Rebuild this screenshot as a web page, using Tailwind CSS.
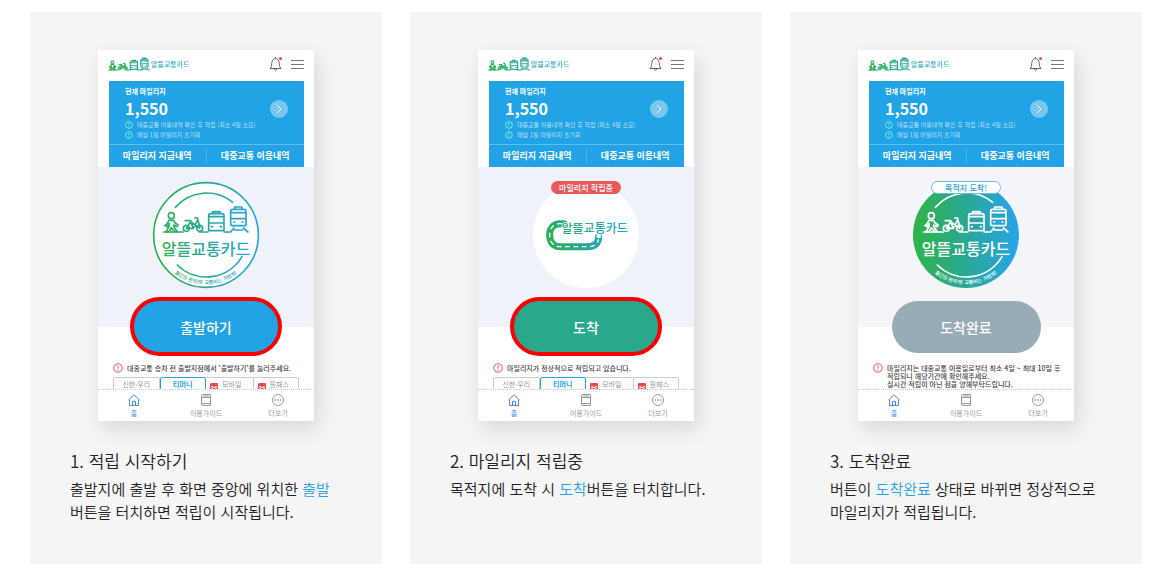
<!DOCTYPE html>
<html lang="ko">
    <head>
        <meta charset="UTF-8">
        <meta name="viewport" content="width=device-width, initial-scale=1.0">
        <title>알뜰교통카드 이용방법</title>
        <script src="https://cdn.jsdelivr.net/npm/@tailwindcss/browser@4"></script>
    </head>
    <body class="bg-white font-['Noto_Sans_CJK_KR',sans-serif] text-[#222]">

        <!-- shared icons -->
        <svg class="absolute size-0" aria-hidden="true">
            <defs>
                <linearGradient id="brand" gradientUnits="userSpaceOnUse" x1="200" y1="0" x2="500" y2="0">
                    <stop offset="0" stop-color="#2fb34a" />
                    <stop offset="0.5" stop-color="#2aa795" />
                    <stop offset="1" stop-color="#27a5e6" />
                </linearGradient>
                <linearGradient id="brand-small" gradientUnits="userSpaceOnUse" x1="222" y1="0" x2="650" y2="0">
                    <stop offset="0" stop-color="#2fb34a" />
                    <stop offset="0.5" stop-color="#2aa795" />
                    <stop offset="1" stop-color="#27a5e6" />
                </linearGradient>
                <path id="slogan-arc" d="M202 209 A148 148 0 0 0 498 209" />
            </defs>

            <!-- walker, bike, bus, train -->
            <symbol id="transport" viewBox="218 118 264 88" overflow="visible">
                <g fill="none" stroke-linecap="round" stroke-linejoin="round">
                    <circle cx="246" cy="151" r="9" />
                    <path d="M239 165 H252 Q256 174 266 178 L264 184 L253 179 L254 185 L264 199 H256 L246 187 L239 199 H230 L239 184 V175 L234 184 L227 181 Q236 174 239 165" />
                    <path d="M223 200 H282 M330 200 H356 M404 200 H424 L434 188 M462 188 L476 200" />
                    <circle cx="291" cy="189" r="9" />
                    <circle cx="331" cy="189" r="9" />
                    <path d="M291 189 L304 169 L331 189 M291 189 H312 L324 166 M288 166 H304 M316 158 H324 L332 186 M304 169 L312 189" />
                    <path d="M358 196 V150 Q358 145 364 145 H398 Q404 145 404 150 V196 Z M358 154 H404 M358 173 H404 M370 145 V139 H392 V145 M366 184 H369 M393 184 H396" />
                    <path d="M424 176 V138 Q424 132 430 132 H464 Q470 132 470 138 V176 Q470 181 464 181 H430 Q424 181 424 176 M424 142 H470 M424 160 H470 M436 132 V125 H458 V132 M433 170 H436 M458 170 H461 M435 194 H460" />
                </g>
            </symbol>

            <symbol id="bell" viewBox="0 0 14 16">
                <path d="M1 12.500 C3 10.500 2.500 8 2.800 6.500 C3.200 4 4.500 2.500 6.500 2.500 C8.500 2.500 9.800 4 10.200 6.500 C10.500 8 10 10.500 12 12.500 Z M5 13 Q6.500 15.500 8 13 M6.500 2.500 V1" fill="none" stroke="#666" />
                <circle cx="11.500" cy="2.500" r="1.500" fill="#f0443a" />
            </symbol>
            <symbol id="menu" viewBox="0 0 13 10">
                <path d="M0 1.500 H13 M0 5.500 H13 M0 9.500 H13" stroke="#777" />
            </symbol>
            <symbol id="go" viewBox="0 0 18 18">
                <circle cx="9" cy="9" r="9" fill="#fff" fill-opacity="0.4" />
                <path d="M7 5 L11 9 L7 13" fill="none" stroke="#fff" />
            </symbol>
            <symbol id="alert" viewBox="0 0 10 10">
                <circle cx="5" cy="5" r="4.200" fill="none" stroke="currentColor" />
                <path d="M5 2.500 V5.500 M5 6.500 V7.500" stroke="currentColor" />
            </symbol>
            <symbol id="home" viewBox="0 0 12 12">
                <path d="M0.500 6 L6 0.800 L11.500 6 M1.500 5.500 V11.500 H10.500 V5.500 M4.500 11.500 V7.500 H7.500 V11.500" fill="none" stroke="currentColor" />
            </symbol>
            <symbol id="guide" viewBox="0 0 12 12">
                <path d="M1.500 1.500 Q1.500 0.500 2.500 0.500 H10.500 V11.500 H3 Q1.500 11.500 1.500 10 Z M1.500 3.500 H10.500 M4 1 V3 M6 1 V3 M8 1 V3 M1.500 9.500 H10.500" fill="none" stroke="currentColor" />
            </symbol>
            <symbol id="more" viewBox="0 0 12 12">
                <circle cx="6" cy="6" r="5.500" fill="none" stroke="currentColor" />
                <path d="M2.500 6 H4 M5.200 6 H6.800 M8 6 H9.500" stroke="currentColor" stroke-width="1.500" />
            </symbol>
            <symbol id="m-card" viewBox="0 0 8 8">
                <rect width="8" height="8" rx="1" fill="#e94b4f" />
                <path d="M2 6.500 V3 L4 5 L6 3 V6.500" fill="none" stroke="#fff" />
            </symbol>
        </svg>

        <main class="grid grid-cols-3 gap-7 py-3 pl-[30px] pr-[21px]">

            <!-- step 1 -->
            <article class="bg-[#f6f5f6] pt-[38px] pb-[41px]">
                <div class="mx-auto w-[216px] bg-white shadow-[4px_8px_20px_rgba(0,0,0,0.12)]">
                    <header class="flex h-[31px] items-center px-[10px] pb-1">
                        <svg class="h-[14px] w-[42px] stroke-[url(#brand-small)] stroke-7"><use href="#transport" /></svg>
                        <span class="ml-px bg-linear-to-r from-[#2aa795] to-[#27a5e6] bg-clip-text text-[7px] font-medium leading-[14px] text-transparent">알뜰교통카드</span>
                        <button class="ml-auto mr-2" aria-label="알림"><svg class="h-4 w-[14px]"><use href="#bell" /></svg></button>
                        <button aria-label="메뉴"><svg class="h-[10px] w-[13px]"><use href="#menu" /></svg></button>
                    </header>
                    <section class="ml-[11px] mr-[10px] bg-[#21a3e6] text-white">
                        <div class="flex h-16 items-center border-b border-white/30 px-4">
                            <div>
                                <h3 class="text-[7px] font-bold leading-[10px]">현재 마일리지</h3>
                                <p class="text-[16px] font-bold leading-[24px]">1,550</p>
                                <p class="flex items-center gap-1 text-[6px] leading-[10px] whitespace-nowrap text-white/70"><svg class="size-2 text-[#8ffbe0]"><use href="#alert" /></svg>대중교통 이용내역 확인 후 적립 (최소 4일 소요)</p>
                                <p class="flex items-center gap-1 text-[6px] leading-[10px] whitespace-nowrap text-white/70"><svg class="size-2 text-[#8ffbe0]"><use href="#alert" /></svg>매월 1일 마일리지 초기화</p>
                            </div>
                            <button class="-mt-2 ml-auto" aria-label="마일리지 보기"><svg class="size-[18px]"><use href="#go" /></svg></button>
                        </div>
                        <div class="grid h-[22px] grid-cols-2 items-center divide-x divide-white/20 text-center text-[9px] font-bold leading-[14px]">
                            <a href="#">마일리지 지급내역</a>
                            <a href="#">대중교통 이용내역</a>
                        </div>
                    </section>
                    <section class="bg-[#eff2f9] pt-[14px] pb-[38px]">
                        <svg class="mx-auto size-[108px]" viewBox="188 47 324 324">
                            <circle cx="350" cy="209" r="157" fill="#fff" stroke="url(#brand)" stroke-width="5" />
                            <path d="M258 126 A124 124 0 0 1 430 111 M264 299 A124 124 0 0 0 458 274" fill="none" stroke="url(#brand)" stroke-width="5" stroke-linecap="round" />
                            <use href="#transport" x="218" y="118" width="264" height="88" stroke="url(#brand)" stroke-width="5" />
                            <text x="350" y="270" text-anchor="middle" font-size="48" font-weight="500" fill="url(#brand)">알뜰교통카드</text>
                            <text font-size="15" font-weight="500" fill="url(#brand)" text-anchor="middle"><textPath href="#slogan-arc" startOffset="50%">출근은 편하게! 교통비는 가볍게!</textPath></text>
                        </svg>
                    </section>
                    <div class="relative -mt-[30px] flex h-[59px] items-center justify-center">
                        <button class="h-[59px] w-[152px] rounded-full border-4 border-[#fb0000] bg-[#21a3e6] text-[14px] font-medium leading-[20px] text-white">출발하기</button>
                    </div>
                    <section class="h-[33px] overflow-hidden px-[15px] pt-2">
                        <p class="flex gap-1 text-[7px] font-medium leading-[8px] whitespace-nowrap text-[#444]"><svg class="-my-px size-[10px] shrink-0 text-[#ee4a60]"><use href="#alert" /></svg>대중교통 승차 전 출발지점에서 '출발하기'를 눌러주세요.</p>
                        <div class="mt-[5px] grid grid-cols-4 text-center text-[7px] leading-[12px] text-[#999]">
                            <button class="h-5 rounded-t-xs border border-[#ccc] pb-2">신한·우리</button>
                            <button class="h-5 rounded-t-xs border border-[#21a3e6] pb-2 font-bold text-[#21a3e6]">티머니</button>
                            <button class="flex h-5 items-start gap-1 border-y border-[#ccc] pl-1"><svg class="mt-[5px] size-2"><use href="#m-card" /></svg>모바일</button>
                            <button class="flex h-5 items-start gap-1 rounded-t-xs border border-[#ccc] pl-1"><svg class="mt-[5px] size-2"><use href="#m-card" /></svg><span class="mt-[2px] leading-[8px]">원패스</span></button>
                        </div>
                    </section>
                    <nav class="grid h-8 grid-cols-3 border-t border-dotted border-[#ccc] pt-1 text-center text-[7px] leading-[14px] text-[#999]">
                        <a href="#" class="text-[#4a90e2]"><svg class="mx-auto size-3"><use href="#home" /></svg>홈</a>
                        <a href="#"><svg class="mx-auto size-3"><use href="#guide" /></svg>이용가이드</a>
                        <a href="#"><svg class="mx-auto size-3"><use href="#more" /></svg>더보기</a>
                    </nav>
                </div>
                <div class="px-10 pt-7">
                    <h2 class="text-[17px] font-[350] leading-[24px]">1. 적립 시작하기</h2>
                    <p class="mt-1 text-[15px] font-[350] leading-[23px]">출발지에 출발 후 화면 중앙에 위치한 <span class="text-[#2b9fe3]">출발</span><br>버튼을 터치하면 적립이 시작됩니다.</p>
                </div>
            </article>

            <!-- step 2 -->
            <article class="bg-[#f6f5f6] pt-[38px] pb-[41px]">
                <div class="mx-auto w-[216px] bg-white shadow-[4px_8px_20px_rgba(0,0,0,0.12)]">
                    <header class="flex h-[31px] items-center px-[10px] pb-1">
                        <svg class="h-[14px] w-[42px] stroke-[url(#brand-small)] stroke-7"><use href="#transport" /></svg>
                        <span class="ml-px bg-linear-to-r from-[#2aa795] to-[#27a5e6] bg-clip-text text-[7px] font-medium leading-[14px] text-transparent">알뜰교통카드</span>
                        <button class="ml-auto mr-2" aria-label="알림"><svg class="h-4 w-[14px]"><use href="#bell" /></svg></button>
                        <button aria-label="메뉴"><svg class="h-[10px] w-[13px]"><use href="#menu" /></svg></button>
                    </header>
                    <section class="ml-[11px] mr-[10px] bg-[#21a3e6] text-white">
                        <div class="flex h-16 items-center border-b border-white/30 px-4">
                            <div>
                                <h3 class="text-[7px] font-bold leading-[10px]">현재 마일리지</h3>
                                <p class="text-[16px] font-bold leading-[24px]">1,550</p>
                                <p class="flex items-center gap-1 text-[6px] leading-[10px] whitespace-nowrap text-white/70"><svg class="size-2 text-[#8ffbe0]"><use href="#alert" /></svg>대중교통 이용내역 확인 후 적립 (최소 4일 소요)</p>
                                <p class="flex items-center gap-1 text-[6px] leading-[10px] whitespace-nowrap text-white/70"><svg class="size-2 text-[#8ffbe0]"><use href="#alert" /></svg>매월 1일 마일리지 초기화</p>
                            </div>
                            <button class="-mt-2 ml-auto" aria-label="마일리지 보기"><svg class="size-[18px]"><use href="#go" /></svg></button>
                        </div>
                        <div class="grid h-[22px] grid-cols-2 items-center divide-x divide-white/20 text-center text-[9px] font-bold leading-[14px]">
                            <a href="#">마일리지 지급내역</a>
                            <a href="#">대중교통 이용내역</a>
                        </div>
                    </section>
                    <section class="relative bg-[#eff2f9] pt-[14px] pb-[38px]">
                        <span class="absolute inset-x-0 top-[14px] mx-auto w-[70px] rounded-full bg-[#e85a5a] text-center text-[8px] font-medium leading-[13px] text-white">마일리지 적립중</span>
                        <svg class="mx-auto size-[108px]" viewBox="188 47 324 324">
                            <circle cx="350" cy="209" r="159" fill="#fff" />
                            <g fill="none" stroke-linecap="round">
                                <path d="M284 175 H272 C250 175 241 192 241 209 C241 230 252 244 272 244 H355 C378 244 388 232 388 214" stroke="url(#brand)" stroke-width="21" />
                                <path d="M276 175 H272 C250 175 241 192 241 209 C241 230 252 244 272 244 H355 C374 244 384 236 387 224" stroke="#fff" stroke-width="4" stroke-dasharray="11 14" />
                            </g>
                            <circle cx="388" cy="212" r="7" fill="#fff" />
                            <text x="376" y="204" text-anchor="middle" font-size="36" font-weight="500" fill="url(#brand)" stroke="#fff" stroke-width="4" paint-order="stroke">알뜰교통카드</text>
                        </svg>
                    </section>
                    <div class="relative -mt-[30px] flex h-[59px] items-center justify-center">
                        <button class="h-[59px] w-[152px] rounded-full border-4 border-[#fb0000] bg-[#2aa88c] text-[14px] font-medium leading-[20px] text-white">도착</button>
                    </div>
                    <section class="h-[33px] overflow-hidden px-[15px] pt-2">
                        <p class="flex gap-1 text-[7px] font-medium leading-[8px] whitespace-nowrap text-[#444]"><svg class="-my-px size-[10px] shrink-0 text-[#ee4a60]"><use href="#alert" /></svg>마일리지가 정상적으로 적립되고 있습니다.</p>
                        <div class="mt-[5px] grid grid-cols-4 text-center text-[7px] leading-[12px] text-[#999]">
                            <button class="h-5 rounded-t-xs border border-[#ccc] pb-2">신한·우리</button>
                            <button class="h-5 rounded-t-xs border border-[#21a3e6] pb-2 font-bold text-[#21a3e6]">티머니</button>
                            <button class="flex h-5 items-start gap-1 border-y border-[#ccc] pl-1"><svg class="mt-[5px] size-2"><use href="#m-card" /></svg>모바일</button>
                            <button class="flex h-5 items-start gap-1 rounded-t-xs border border-[#ccc] pl-1"><svg class="mt-[5px] size-2"><use href="#m-card" /></svg><span class="mt-[2px] leading-[8px]">원패스</span></button>
                        </div>
                    </section>
                    <nav class="grid h-8 grid-cols-3 border-t border-dotted border-[#ccc] pt-1 text-center text-[7px] leading-[14px] text-[#999]">
                        <a href="#" class="text-[#4a90e2]"><svg class="mx-auto size-3"><use href="#home" /></svg>홈</a>
                        <a href="#"><svg class="mx-auto size-3"><use href="#guide" /></svg>이용가이드</a>
                        <a href="#"><svg class="mx-auto size-3"><use href="#more" /></svg>더보기</a>
                    </nav>
                </div>
                <div class="px-10 pt-7">
                    <h2 class="text-[17px] font-[350] leading-[24px]">2. 마일리지 적립중</h2>
                    <p class="mt-1 text-[15px] font-[350] leading-[23px]">목적지에 도착 시 <span class="text-[#2b9fe3]">도착</span>버튼을 터치합니다.</p>
                </div>
            </article>

            <!-- step 3 -->
            <article class="bg-[#f6f5f6] pt-[38px] pb-[41px]">
                <div class="mx-auto w-[216px] bg-white shadow-[4px_8px_20px_rgba(0,0,0,0.12)]">
                    <header class="flex h-[31px] items-center px-[10px] pb-1">
                        <svg class="h-[14px] w-[42px] stroke-[url(#brand-small)] stroke-7"><use href="#transport" /></svg>
                        <span class="ml-px bg-linear-to-r from-[#2aa795] to-[#27a5e6] bg-clip-text text-[7px] font-medium leading-[14px] text-transparent">알뜰교통카드</span>
                        <button class="ml-auto mr-2" aria-label="알림"><svg class="h-4 w-[14px]"><use href="#bell" /></svg></button>
                        <button aria-label="메뉴"><svg class="h-[10px] w-[13px]"><use href="#menu" /></svg></button>
                    </header>
                    <section class="ml-[11px] mr-[10px] bg-[#21a3e6] text-white">
                        <div class="flex h-16 items-center border-b border-white/30 px-4">
                            <div>
                                <h3 class="text-[7px] font-bold leading-[10px]">현재 마일리지</h3>
                                <p class="text-[16px] font-bold leading-[24px]">1,550</p>
                                <p class="flex items-center gap-1 text-[6px] leading-[10px] whitespace-nowrap text-white/70"><svg class="size-2 text-[#8ffbe0]"><use href="#alert" /></svg>대중교통 이용내역 확인 후 적립 (최소 4일 소요)</p>
                                <p class="flex items-center gap-1 text-[6px] leading-[10px] whitespace-nowrap text-white/70"><svg class="size-2 text-[#8ffbe0]"><use href="#alert" /></svg>매월 1일 마일리지 초기화</p>
                            </div>
                            <button class="-mt-2 ml-auto" aria-label="마일리지 보기"><svg class="size-[18px]"><use href="#go" /></svg></button>
                        </div>
                        <div class="grid h-[22px] grid-cols-2 items-center divide-x divide-white/20 text-center text-[9px] font-bold leading-[14px]">
                            <a href="#">마일리지 지급내역</a>
                            <a href="#">대중교통 이용내역</a>
                        </div>
                    </section>
                    <section class="relative bg-[#f4f5fa] pt-[14px] pb-[38px]">
                        <span class="absolute inset-x-0 top-[14px] mx-auto w-[70px] rounded-full border border-[#6db9e8] bg-white text-center text-[8px] font-medium leading-[11px] text-[#2b9fe3]">목적지 도착!</span>
                        <svg class="mx-auto size-[108px]" viewBox="188 47 324 324">
                            <circle cx="350" cy="209" r="159" fill="url(#brand)" />
                            <path d="M258 126 A124 124 0 0 1 430 111 M264 299 A124 124 0 0 0 458 274" fill="none" stroke="#fff" stroke-width="5" stroke-linecap="round" />
                            <use href="#transport" x="218" y="118" width="264" height="88" stroke="#fff" stroke-width="5" />
                            <text x="350" y="270" text-anchor="middle" font-size="48" font-weight="500" fill="#fff">알뜰교통카드</text>
                            <text font-size="15" font-weight="500" fill="#fff" text-anchor="middle"><textPath href="#slogan-arc" startOffset="50%">출근은 편하게! 교통비는 가볍게!</textPath></text>
                        </svg>
                    </section>
                    <div class="relative -mt-[30px] flex h-[59px] items-center justify-center">
                        <button class="h-[52px] w-[149px] rounded-full bg-[#97acb4] text-[14px] font-medium leading-[20px] text-white">도착완료</button>
                    </div>
                    <section class="h-[33px] overflow-hidden px-[15px] pt-2">
                        <p class="flex gap-1 text-[7px] font-medium leading-[8px] whitespace-nowrap text-[#444]"><svg class="-my-px size-[10px] shrink-0 text-[#ee4a60]"><use href="#alert" /></svg><span>마일리지는 대중교통 이용일로부터 최소 4일 ~ 최대 10일 후<br>적립되니 해당기간에 확인해주세요.<br>실시간 적립이 아닌 점을 양해부탁드립니다.</span></p>
                    </section>
                    <nav class="grid h-8 grid-cols-3 border-t border-dotted border-[#ccc] pt-1 text-center text-[7px] leading-[14px] text-[#999]">
                        <a href="#" class="text-[#4a90e2]"><svg class="mx-auto size-3"><use href="#home" /></svg>홈</a>
                        <a href="#"><svg class="mx-auto size-3"><use href="#guide" /></svg>이용가이드</a>
                        <a href="#"><svg class="mx-auto size-3"><use href="#more" /></svg>더보기</a>
                    </nav>
                </div>
                <div class="px-10 pt-7">
                    <h2 class="text-[17px] font-[350] leading-[24px]">3. 도착완료</h2>
                    <p class="mt-1 text-[15px] font-[350] leading-[23px]">버튼이 <span class="text-[#2b9fe3]">도착완료</span> 상태로 바뀌면 정상적으로<br>마일리지가 적립됩니다.</p>
                </div>
            </article>

        </main>
    </body>
</html>
